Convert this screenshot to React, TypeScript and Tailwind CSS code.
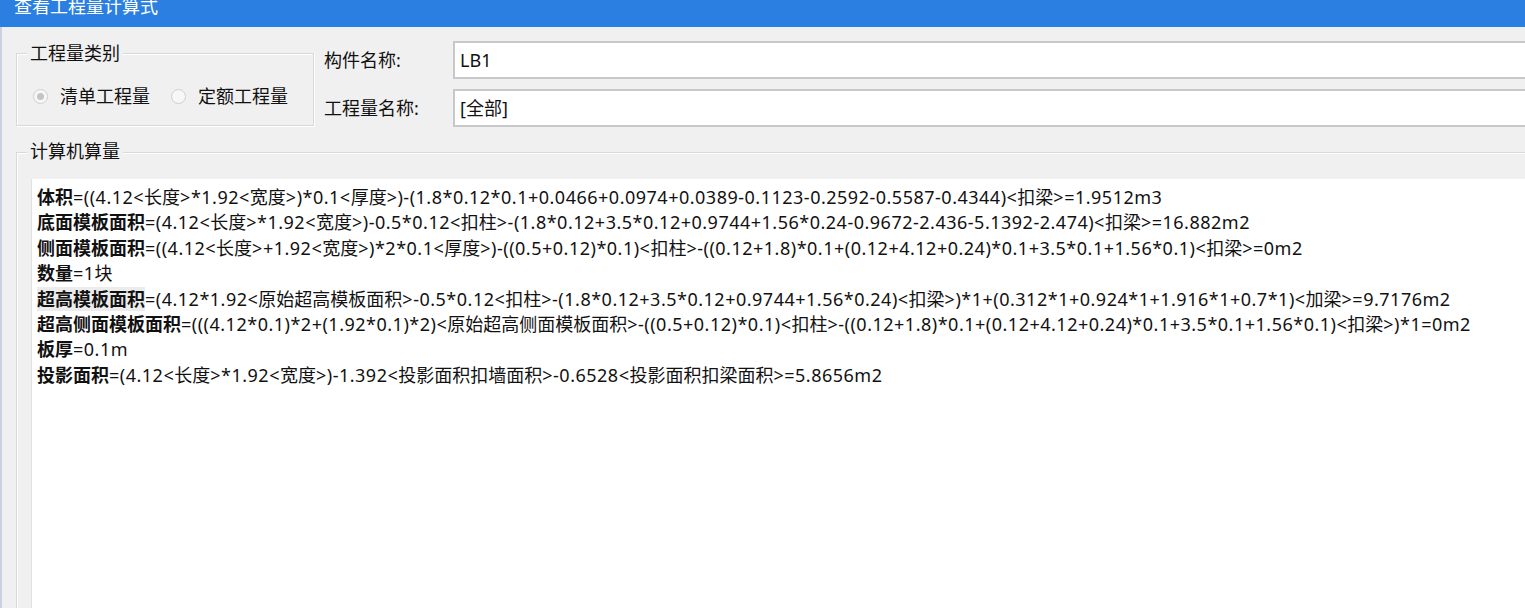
import React from "react";

const FONT = '"Noto Sans", "Noto Sans CJK SC", sans-serif';

type Line = { label: string; body: string; hl?: boolean };

const lines: Line[] = [
  { label: "体积", body: "=((4.12<长度>*1.92<宽度>)*0.1<厚度>)-(1.8*0.12*0.1+0.0466+0.0974+0.0389-0.1123-0.2592-0.5587-0.4344)<扣梁>=1.9512m3" },
  { label: "底面模板面积", body: "=(4.12<长度>*1.92<宽度>)-0.5*0.12<扣柱>-(1.8*0.12+3.5*0.12+0.9744+1.56*0.24-0.9672-2.436-5.1392-2.474)<扣梁>=16.882m2" },
  { label: "侧面模板面积", body: "=((4.12<长度>+1.92<宽度>)*2*0.1<厚度>)-((0.5+0.12)*0.1)<扣柱>-((0.12+1.8)*0.1+(0.12+4.12+0.24)*0.1+3.5*0.1+1.56*0.1)<扣梁>=0m2" },
  { label: "数量", body: "=1块" },
  { label: "超高模板面积", hl: true, body: "=(4.12*1.92<原始超高模板面积>-0.5*0.12<扣柱>-(1.8*0.12+3.5*0.12+0.9744+1.56*0.24)<扣梁>)*1+(0.312*1+0.924*1+1.916*1+0.7*1)<加梁>=9.7176m2" },
  { label: "超高侧面模板面积", body: "=(((4.12*0.1)*2+(1.92*0.1)*2)<原始超高侧面模板面积>-((0.5+0.12)*0.1)<扣柱>-((0.12+1.8)*0.1+(0.12+4.12+0.24)*0.1+3.5*0.1+1.56*0.1)<扣梁>)*1=0m2" },
  { label: "板厚", body: "=0.1m" },
  { label: "投影面积", body: "=(4.12<长度>*1.92<宽度>)-1.392<投影面积扣墙面积>-0.6528<投影面积扣梁面积>=5.8656m2" },
];

function Body({ text }: { text: string }) {
  const parts = text.split(/([\u4e00-\u9fff]+)/).filter((p) => p.length > 0);
  return (
    <>
      {parts.map((p, i) =>
        /[\u4e00-\u9fff]/.test(p) ? (
          <span key={i}>{p}</span>
        ) : (
          <span key={i} className="tracking-[0.5px]">{p}</span>
        )
      )}
    </>
  );
}

function Radio({ checked, label }: { checked?: boolean; label: string }) {
  return (
    <div className="flex items-center">
      <div className="w-[15px] h-[15px] rounded-full border border-[#cfcfcf] bg-[#f7f7f7] flex items-center justify-center">
        {checked && <div className="w-[7px] h-[7px] rounded-full bg-[#c4c4c4]" />}
      </div>
      <span className="ml-[12px] text-[18px] text-[#111111]">{label}</span>
    </div>
  );
}

export default function App() {
  return (
    <div className="w-[1525px] h-[608px] overflow-hidden bg-[#f0f0f0] flex flex-col" style={{ fontFamily: FONT }}>
      <div className="h-[27px] bg-[#2b7fe0] shrink-0 overflow-hidden pl-[14px]">
        <div className="text-white text-[18px] leading-[18px] mt-[-3px]">查看工程量计算式</div>
      </div>
      <div className="flex-1 flex flex-col border-l-2 border-[#c9d1e2] pl-[14px] min-h-0">
        <div className="flex pt-[14px] h-[103px] shrink-0">
          <div className="relative mt-[12px] w-[298px] h-[73px] border border-[#d9d9d9] shadow-[inset_1px_1px_0_#ffffff,1px_1px_0_#ffffff]">
            <div className="absolute left-[10px] top-[-14px] px-[3px] bg-[#f0f0f0] text-[18px] leading-[26px] text-[#111111]">工程量类别</div>
            <div className="flex items-center gap-[21px] pl-[16px] pt-[29px]">
              <Radio checked label="清单工程量" />
              <Radio label="定额工程量" />
            </div>
          </div>
          <div className="flex-1 flex flex-col gap-[10px] ml-[10px]">
            <div className="flex items-center h-[38px]">
              <div className="w-[129px] text-[18px] text-[#111111]">构件名称:</div>
              <div className="flex-1 h-[38px] bg-white border-2 border-r-0 border-[#c8c8c8] flex items-center pl-[5px] text-[18px] text-[#111111]">LB1</div>
            </div>
            <div className="flex items-center h-[38px]">
              <div className="w-[129px] text-[18px] text-[#111111]">工程量名称:</div>
              <div className="flex-1 h-[38px] bg-white border-2 border-r-0 border-[#c8c8c8] flex items-center pl-[5px] text-[18px] text-[#111111]">[全部]</div>
            </div>
          </div>
        </div>
        <div className="relative mt-[22px] flex-1 min-h-0 border-l border-t border-[#d9d9d9] shadow-[inset_1px_1px_0_#ffffff]">
          <div className="absolute left-[10px] top-[-15px] px-[3px] bg-[#f0f0f0] text-[18px] leading-[26px] text-[#111111]">计算机算量</div>
          <div className="ml-[14px] mt-[26px] h-full bg-white border-l border-[#e2e2e2] pl-[5px] pt-[6px]">
            {lines.map((l, i) => (
              <div key={i} className="h-[25.4px] leading-[25.4px] text-[18px] text-[#111111] whitespace-nowrap">
                <span className={"font-bold " + (l.hl ? "bg-[#ececec]" : "")}>{l.label}</span>
                <Body text={l.body} />
              </div>
            ))}
          </div>
        </div>
      </div>
    </div>
  );
}
